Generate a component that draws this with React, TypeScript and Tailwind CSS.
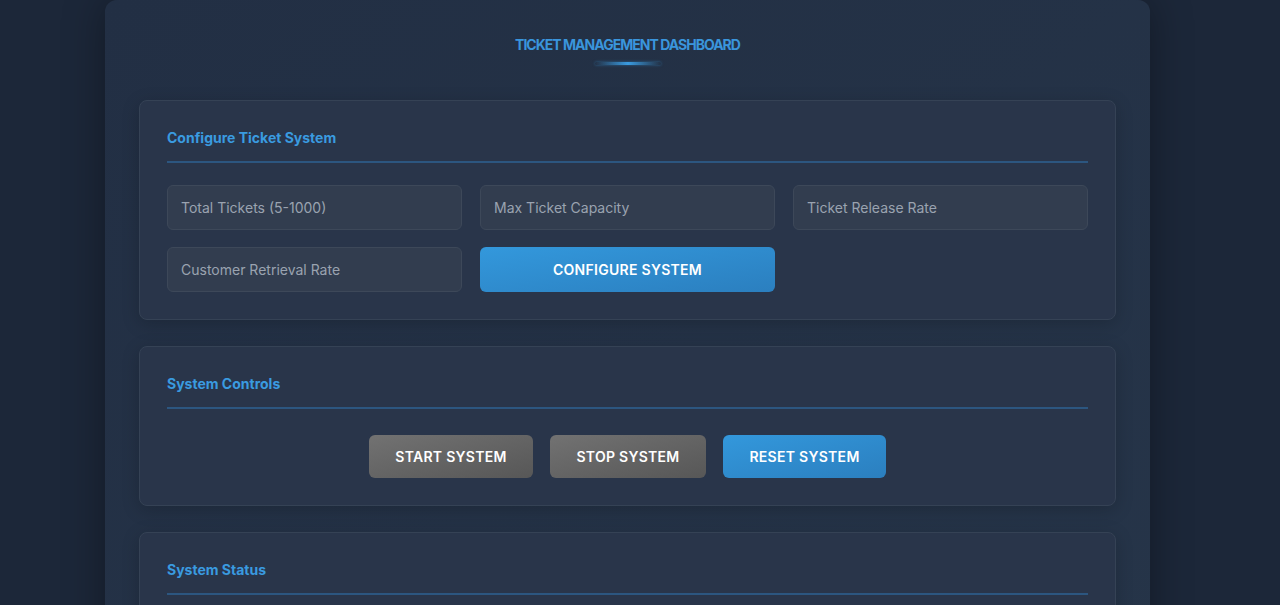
const inputCls =
  'h-[45px] w-full rounded-md border border-[#3d4859] bg-[#323d4f] px-[13px] text-[14px] text-[#c8ced8] placeholder:text-[#9aa3b0] outline-none';

function Section({ title, children }: { title: string; children: React.ReactNode }) {
  return (
    <section className="rounded-lg border border-[#354255] bg-[#29354a] px-[27px] pb-[27px] pt-[27px] shadow-[0_4px_18px_rgba(0,0,0,0.18)]">
      <h2 className="border-b-2 border-[#2c5680] pb-[13px] text-[14px] font-bold leading-5 text-[#3a9be0]">{title}</h2>
      {children}
    </section>
  );
}

export default function App() {
  return (
    <div
      className="min-h-[605px] bg-[#1c2739] pl-[105px]"
      style={{ fontFamily: 'Inter, "Noto Sans", sans-serif' }}
    >
      <div className="w-[1045px] rounded-t-xl bg-gradient-to-br from-[#222f44] to-[#263549] px-[34px] pb-10 shadow-[0_0_40px_rgba(0,0,0,0.35)]">
        <div className="flex flex-col items-center pt-[37px]">
          <h1 className="text-[14px] font-bold leading-4 tracking-[-0.07em] text-[#3a95dc]">TICKET MANAGEMENT DASHBOARD</h1>
          <div className="mt-[9px] h-[3px] w-[66px] rounded-full bg-gradient-to-r from-transparent via-[#3a9be0] to-transparent shadow-[0_0_3px_rgba(58,155,224,0.5)]" />
        </div>

        <div className="mt-[35px] flex flex-col gap-[26px]">
          <Section title="Configure Ticket System">
            <div className="mt-[22px] grid grid-cols-3 gap-x-[18px] gap-y-[17px]">
              <input className={inputCls} placeholder="Total Tickets (5-1000)" />
              <input className={inputCls} placeholder="Max Ticket Capacity" />
              <input className={inputCls} placeholder="Ticket Release Rate" />
              <input className={inputCls} placeholder="Customer Retrieval Rate" />
              <button className="h-[45px] rounded-md bg-gradient-to-br from-[#3398dc] to-[#2b7fbf] text-[14px] font-semibold tracking-[0.02em] text-white">
                CONFIGURE SYSTEM
              </button>
            </div>
          </Section>

          <Section title="System Controls">
            <div className="mt-[26px] flex justify-center gap-[17px]">
              <button className="h-[43px] w-[164px] rounded-md bg-gradient-to-br from-[#727272] to-[#575757] text-[14px] font-semibold tracking-[0.02em] text-white">
                START SYSTEM
              </button>
              <button className="h-[43px] w-[156px] rounded-md bg-gradient-to-br from-[#727272] to-[#575757] text-[14px] font-semibold tracking-[0.02em] text-white">
                STOP SYSTEM
              </button>
              <button className="h-[43px] w-[163px] rounded-md bg-gradient-to-br from-[#3398dc] to-[#2b7fbf] text-[14px] font-semibold tracking-[0.02em] text-white">
                RESET SYSTEM
              </button>
            </div>
          </Section>

          <Section title="System Status">
            <div className="mt-[22px] h-[120px]" />
          </Section>
        </div>
      </div>
    </div>
  );
}
